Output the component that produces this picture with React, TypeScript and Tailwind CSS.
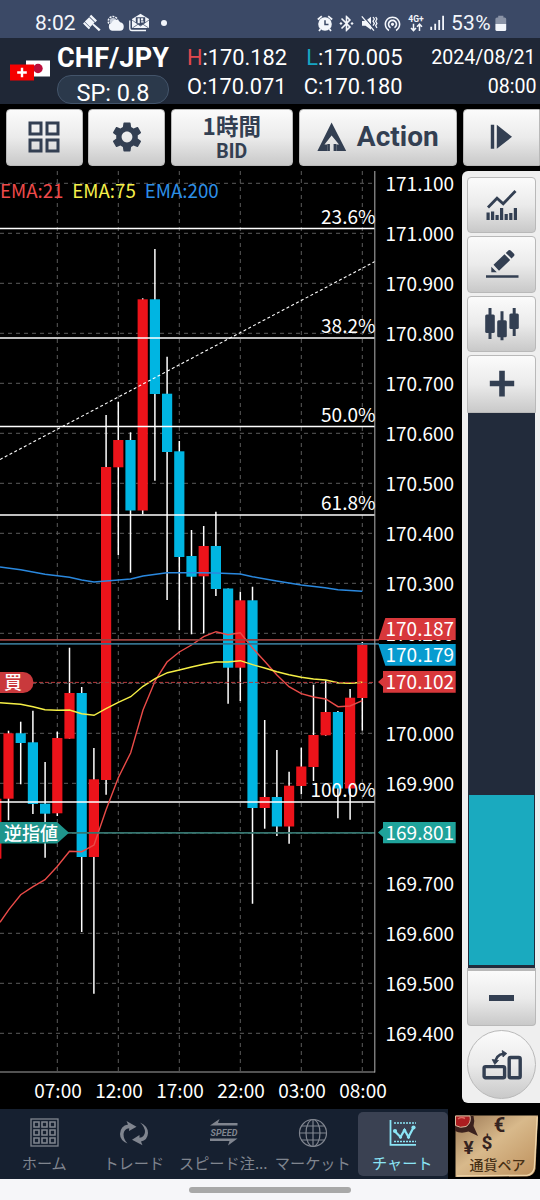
import React from "react";
import { MdSettings, MdBluetoothConnected, MdWifiTethering } from "react-icons/md";

const INK = "#333f52";

/* ---------- chart data ---------- */
// [bodyTop, bodyBottom, wickTop, wickBottom, rising]
type Candle = [number, number, number, number, boolean];

const STEP = 12.2;
const FIRST_X = -3.7;
const candles: Candle[] = [
  [798.7, 858.7, 798.7, 858.7, true],
  [733.3, 798.7, 730.7, 820.3, true],
  [733.3, 743, 721.7, 784.3, false],
  [742.3, 804, 710.7, 814, false],
  [803.7, 813.7, 762, 857.7, false],
  [738, 813.3, 731.7, 816, true],
  [693, 738.7, 647.7, 738.7, true],
  [693, 857, 687, 932, false],
  [779.3, 857, 748, 993.7, true],
  [467, 780, 415, 794.7, true],
  [440, 467.3, 401.7, 555, true],
  [440, 510.5, 432.3, 572.7, false],
  [299.3, 510.5, 298.3, 514.3, true],
  [299.3, 394, 249, 480.7, false],
  [393.7, 452, 356.7, 600, false],
  [451.3, 557, 441, 630, false],
  [556, 576.7, 530, 634.3, false],
  [546, 576.3, 526, 633.3, true],
  [546, 589, 511.7, 596, false],
  [588.5, 667.7, 588.5, 703.7, false],
  [600.3, 667.7, 591.7, 701, true],
  [600.3, 808, 586.7, 903.7, false],
  [797, 808, 720, 828.7, true],
  [797, 826.5, 750, 836, false],
  [785.7, 826.5, 771.7, 843.7, true],
  [766.5, 786, 747.7, 794.3, true],
  [735, 767, 684.7, 781, true],
  [712, 735.3, 680.3, 735.7, true],
  [712, 788.5, 711, 818.3, false],
  [697.7, 788.5, 689, 819.7, true],
  [644.7, 698, 642, 730.7, true],
];

const ema200 =
  "0,567 20.7,569.7 45,574.3 69.5,577.3 81.7,580 94,582 106,581 130.7,579 143,576 167,572.7 200,572.7 216,573 240.3,574 252.5,576.7 276.7,581 301.3,585 325,587.7 338,589.7 362.3,591.3";
const ema75 =
  "0,702.7 20.7,704.3 33,706.7 45,709.7 57,710.3 69.5,710 81.7,713.7 94,715.3 106,708.7 118.3,702.3 130.7,696.7 143,686.3 155.5,678.3 167.5,672.7 179.3,670 191.5,667 203.7,664.3 216,662 228,662 240.3,660.7 252.5,664.7 264.7,668 276.9,671.7 289,674.7 301.3,677.3 313.5,679 325.7,680 338,682.7 350,683.3 362.3,682.3";
const ema21 =
  "0,922.3 9,909.3 20.7,894.7 33,886.7 45,879.7 57,866.7 69.5,851.3 81.7,851.7 94,845 106,810 118.3,777.7 130.7,752.7 143,710 155.5,680 167,662 179.3,652 191.5,645 203.7,636.7 216,631.7 228,634.7 240.3,632.7 252.5,648 264.7,661.3 276.9,675 289,686.7 301.3,693.7 313.5,697 325.7,699 338,706.7 350,706 362.3,700.7";

const priceLabels = Array.from({ length: 18 }, (_, i) => ({
  y: 183.3 + i * 50,
  text: (171.1 - i * 0.1).toFixed(3),
}));

const times = ["07:00", "12:00", "17:00", "22:00", "03:00", "08:00"];

const fibs = [
  { y: 228.5, text: "23.6%" },
  { y: 338, text: "38.2%" },
  { y: 426.5, text: "50.0%" },
  { y: 515, text: "61.8%" },
  { y: 802, text: "100.0%" },
];

function Chart() {
  return (
    <svg
      width="462"
      height="938"
      viewBox="0 171 462 938"
      className="block shrink-0 font-['Noto_Sans_CJK_JP',sans-serif] text-[19px]"
    >
      <g stroke="#5c5c5c" strokeWidth="1" strokeDasharray="4 4">
        {priceLabels.map((p) => (
          <line key={p.text} x1="0" x2="374" y1={p.y} y2={p.y} />
        ))}
        {times.map((t, i) => (
          <line key={t} x1={57.3 + i * 61} x2={57.3 + i * 61} y1="171" y2="1072" />
        ))}
      </g>

      {candles.map(([top, bottom, high, low, up], i) => {
        const x = FIRST_X + i * STEP;
        return (
          <g key={i}>
            <line x1={x} x2={x} y1={high} y2={low} stroke="#fff" strokeWidth="1.5" />
            <rect x={x - 5.1} y={top} width="10.2" height={bottom - top} fill={up ? "#ec131a" : "#00b5e2"} />
          </g>
        );
      })}

      <g stroke="#fff" strokeWidth="1.3">
        {fibs.map((f) => (
          <line key={f.text} x1="0" x2="375" y1={f.y} y2={f.y} />
        ))}
      </g>
      <line x1="0" y1="459.5" x2="375" y2="261.5" stroke="#fff" strokeWidth="1.1" strokeDasharray="3 2.4" />

      <g fill="none" strokeWidth="1.4">
        <polyline points={ema200} stroke="#2a88de" />
        <polyline points={ema21} stroke="#ea4b48" />
        <polyline points={ema75} stroke="#f5ef45" />
      </g>

      <line x1="0" x2="379" y1="639.8" y2="639.8" stroke="#964240" strokeWidth="1.7" />
      <line x1="0" x2="379" y1="643.8" y2="643.8" stroke="#34708c" strokeWidth="1.7" />
      <line x1="33" x2="375" y1="682.4" y2="682.4" stroke="#b63a3c" strokeWidth="1" strokeDasharray="4 2" />
      <line x1="68" x2="375" y1="832.8" y2="832.8" stroke="#35756f" strokeWidth="1.7" />

      <g stroke="#a3a3a3" strokeWidth="1.1">
        <line x1="374.8" x2="374.8" y1="171" y2="1072.5" />
        <line x1="0" x2="375" y1="1072" y2="1072" />
      </g>

      <g fill="#fff" textAnchor="end">
        {fibs.map((f) => (
          <text key={f.text} x="375.5" y={f.y - 5}>
            {f.text}
          </text>
        ))}
      </g>

      <g className="text-[18.700px]">
        <text x="0" y="197.6" fill="#ee4a4a">EMA:21</text>
        <text x="72.300" y="197.6" fill="#f6f04a">EMA:75</text>
        <text x="144.800" y="197.6" fill="#2d8fe6">EMA:200</text>
      </g>

      <g fill="#fff">
        {priceLabels.map((p) => (
          <text key={p.text} x="385.5" y={p.y + 7.2}>
            {p.text}
          </text>
        ))}
      </g>
      <g fill="#fff" textAnchor="middle">
        {times.map((t, i) => (
          <text key={t} x={58 + i * 61} y="1097.8">
            {t}
          </text>
        ))}
      </g>

      <path d="M385.3 618H455.7V640H378.3Z" fill="#d8383b" />
      <path d="M378.3 644H455.7V665.7H385.3Z" fill="#079cd0" />
      <path d="M383 671H455.7V692.8H383V686.5L378 682L383 677.5Z" fill="#d8383b" />
      <path d="M383 822H455.7V843.2H383V837L378 832.5L383 828Z" fill="#1fa39b" />
      <g fill="#fff">
        <text x="385.5" y="636">170.187</text>
        <text x="385.5" y="661.7">170.179</text>
        <text x="385.5" y="688.7">170.102</text>
        <text x="385.5" y="839.5">169.801</text>
      </g>

      <path d="M0 672H23A10.4 10.4 0 0 1 23 693H0Z" fill="#c9393c" />
      <path d="M0 822H57L69 832.7L57 843.5H0Z" fill="#1f958c" />
      <g fill="#fff" className="text-[18px] font-medium">
        <text x="4" y="689.3">買</text>
        <text x="4" y="839.5">逆指値</text>
      </g>
    </svg>
  );
}

/* ---------- status bar ---------- */
function StatusBar() {
  return (
    <div className="flex h-[37.5px] shrink-0 items-center bg-[#3b4966] pt-[9px] font-['Roboto',sans-serif] text-[21px] leading-[28px] text-[#f3f6fb]">
      <span className="ml-[35px] w-[47px]">8:02</span>
      <svg className="ml-[1px] block" width="19" height="18" viewBox="0 0 19 18" fill="#f3f6fb">
        <path d="M8.200 .8L14 6.600L12.300 8.300L6.500 2.500ZM6.200 3.200L11.600 8.600L7.200 13L1.800 7.600ZM1.500 8L7.300 13.800L5.800 15.300L0 9.500Z" />
        <path d="M10.500 9.400L17.600 15.400L15.900 17.200L9.200 10.800Z" />
      </svg>
      <svg className="ml-[5px] block" width="18" height="17" viewBox="0 0 18 17">
        <circle cx="6" cy="6.2" r="4.7" fill="none" stroke="#f3f6fb" strokeWidth="1.6" strokeDasharray="2 1" />
        <circle cx="6" cy="6.2" r="3.2" fill="#c5ccd9" />
        <path d="M5 15.8a4 4 0 0 1-.4-7.7 4.6 4.6 0 0 1 8.6-.8 4.3 4.3 0 0 1-.2 8.5Z" fill="#f3f6fb" />
      </svg>
      <svg className="-mt-[2px] ml-[4px] block" width="21" height="19" viewBox="0 0 21 19">
        <path d="M3 6L11.5 .8L20 6V15H3Z" fill="#f3f6fb" />
        <path d="M6.8 4.2h9.4v5.6l-4.7 3-4.7-3Z" fill="#3b4966" />
        <path d="M8.600 5.200h2.200v5H8.600zM12 5.200h2.200v2.200h-2.200zM12 8.200h2.600v1.400h-2.600z" fill="#f3f6fb" />
        <path d="M3 7l8.5 6L20 7M3.4 15l6-4M19.6 15l-6-4" fill="none" stroke="#3b4966" strokeWidth=".7" />
        <path d="M.8 7.5V15.2Q.8 17.5 3 17.5H17" fill="none" stroke="#f3f6fb" strokeWidth="1.3" />
      </svg>
      <span className="ml-[11px] size-[6px] rounded-full bg-[#f3f6fb]" />
      <svg className="ml-[149.500px] block" width="16" height="17" viewBox="0 0 16 17">
        <circle cx="8" cy="9" r="6.800" fill="#f3f6fb" />
        <path d="M.8 4.500L4.800 1.200M15.200 4.500L11.200 1.200M3.500 14L2 16M12.500 14L14 16" stroke="#f3f6fb" strokeWidth="1.700" />
        <path d="M8 5.200V9.400H11.500" fill="none" stroke="#3b4966" strokeWidth="1.500" />
      </svg>
      <MdBluetoothConnected className="ml-[4px] block" size={19} />
      <svg className="ml-[5.500px] block" width="17" height="17" viewBox="0 0 17 17">
        <path d="M1 6h3.5L10 1.8v13L4.5 10.8H1Z" fill="#f3f6fb" />
        <path d="M2 .8L14 14.800" stroke="#3b4966" strokeWidth="1.200" />
        <path d="M.8 1.3L13 15.6M12 2l1.4 2-1.4 2.2 1.4 2.2L12 10.6M14.7 2l1.2 2-1.2 2.2 1.2 2.2-1.2 2.2 1.2 2.4" fill="none" stroke="#f3f6fb" strokeWidth="1.3" />
      </svg>
      <MdWifiTethering className="ml-[4.5px] block" size={19} />
      <div className="ml-[5px] flex w-[19px] flex-col items-center">
        <span className="text-[8.5px] leading-[8px] font-bold">4G+</span>
        <svg className="block" width="13" height="9" viewBox="0 0 13 9" fill="none" stroke="#f3f6fb" strokeWidth="1.5">
          <path d="M3.5 .8V7.4M1 5L3.5 7.6L6 5M9.5 8V1.2M7 3.8L9.5 1.2L12 3.8" />
        </svg>
      </div>
      <svg className="ml-[4.5px] block" width="15" height="16" viewBox="0 0 15 16" fill="#f3f6fb">
        <path d="M.3 11.8h1.8V15H.3zM4.3 8.7h1.8V15H4.3zM8.3 5h1.8v10H8.3zM12.2 .8h1.8V15h-1.8z" />
      </svg>
      <span className="ml-[6px] w-[43px] tracking-[0.300px]">53%</span>
      <svg className="ml-[1px] block" width="12" height="17" viewBox="0 0 12 17">
        <path d="M3.2 .8h5.2v1.7h1.2q1.6 0 1.6 1.6V9H.4V4.100q0-1.600 1.600-1.600h1.200Z" fill="#8a93a6" />
        <path d="M.4 9h10.800v5.500q0 1.600-1.600 1.600H2q-1.600 0-1.600-1.600Z" fill="#f3f6fb" />
      </svg>
    </div>
  );
}

/* ---------- quote header ---------- */
function Header() {
  return (
    <div className="flex h-[66px] shrink-0 items-start overflow-hidden bg-[#1f2736] font-['Roboto',sans-serif] text-white">
      <svg className="mt-[22px] ml-[10px] block shrink-0" width="41" height="21" viewBox="0 0 41 21">
        <rect x="16" y=".5" width="24" height="16" fill="#fff" />
        <circle cx="28" cy="8.500" r="4.700" fill="#bd0d3a" />
        <rect x="0" y="4.500" width="24" height="16" fill="#f50000" />
        <path d="M10.800 7.700h2.400v3.600h3.600v2.400h-3.600v3.600h-2.400v-3.600H7.200v-2.400h3.600Z" fill="#fff" />
      </svg>
      <div className="ml-[6px] flex w-[130px] shrink-0 flex-col">
        <span className="mt-[4px] text-[27px] leading-[32px] font-bold tracking-[0.200px] whitespace-nowrap">CHF/JPY</span>
        <span className="mt-px flex h-[29px] w-[112px] items-center justify-center rounded-[14px] border border-[#43546a] bg-[#2b394b] pt-[7px] text-[23.500px] leading-[28px]">
          SP: 0.8
        </span>
      </div>
      <div className="mt-[5px] flex w-[116px] shrink-0 flex-col text-[21.800px] leading-[29px]">
        <span><span className="text-[#e0484e]">H</span>:170.182</span>
        <span>O:170.071</span>
      </div>
      <div className="mt-[5px] flex w-[99.500px] shrink-0 flex-col items-end text-[21.800px] leading-[29px]">
        <span><span className="text-[#16a5c4]">L</span>:170.005</span>
        <span>C:170.180</span>
      </div>
      <div className="mt-[5px] flex w-[134px] shrink-0 flex-col items-end text-[19.600px] leading-[29px]">
        <span className="mr-[1px]">2024/08/21</span>
        <span>08:00</span>
      </div>
    </div>
  );
}

/* ---------- toolbar ---------- */
const BTN =
  "flex shrink-0 items-center justify-center border border-[#b9b9b9] bg-linear-to-b from-[#fbfbfb] via-[#ebebeb] to-[#c9c9c9] text-[#333f52]";

function Toolbar() {
  return (
    <div className="flex h-[67px] shrink-0 items-start gap-[5.500px] overflow-hidden bg-black pt-[5px] pl-[5.500px] font-['Roboto',sans-serif]">
      <div className={`${BTN} h-[57px] w-[77px] rounded-[4px]`}>
        <svg className="block" width="32" height="32" viewBox="0 0 32 32" fill="none" stroke={INK} strokeWidth="3">
          <path d="M2 2h11v11H2zM19 2h11v11H19zM2 19h11v11H2zM19 19h11v11H19z" />
        </svg>
      </div>
      <div className={`${BTN} h-[57px] w-[77px] rounded-[4px]`}>
        <MdSettings size={36} color={INK} />
      </div>
      <div className={`${BTN} h-[57px] w-[122.500px] flex-col rounded-[4px]`}>
        <span className="font-['Noto_Sans_CJK_JP',sans-serif] text-[22.500px] leading-[27px] font-bold">1時間</span>
        <span className="mt-px text-[19.500px] leading-[23px] font-bold">BID</span>
      </div>
      <div className={`${BTN} h-[57px] w-[158.500px] rounded-[4px]`}>
        <svg className="block" width="30" height="30" viewBox="0 0 30 30" fill={INK}>
          <path d="M14.600 .5L29.200 29H19.400V22.500H22L14.600 13.500L7.500 22.500H10.300V29H.4Z" />
          <path d="M11.600 29V21.500H9.800L14.700 15.500L19.700 21.500H17.900V29H16.600V20L14.700 18L12.900 20V29Z" fill="#e4e4e4" />
          <path d="M12.900 22h-2.600V29h2.600zM16.600 22h2.800V29h-2.800z" />
        </svg>
        <span className="ml-[10px] text-[28px] leading-[34px] font-bold">Action</span>
      </div>
      <div className={`${BTN} h-[57px] w-[77px] rounded-l-[4px]`}>
        <svg className="block" width="23" height="26" viewBox="0 0 23 26" fill={INK}>
          <path d="M.8 .8h3.400v24H.8zM6.800 .8L22 12.800L6.800 24.800Z" />
        </svg>
      </div>
    </div>
  );
}

/* ---------- side tools ---------- */
function SideTools() {
  return (
    <div className="mt-0 flex h-[932px] w-[78px] shrink-0 flex-col items-start rounded-l-[6px] bg-[#efefef] pt-[6px] pl-[5px]">
      <div className={`${BTN} h-[56.500px] w-[69px] rounded-[4px]`}>
        <svg className="block" width="32" height="32" viewBox="0 0 32 32" fill={INK}>
          <path d="M2 18.500L11 9.200L17.200 14.800L29.500 2" fill="none" stroke={INK} strokeWidth="2.800" />
          <path d="M.5 23.500h3.200v7.500H.5zM5 22.500h3.200v8.500H5zM9.500 26h3.200v5H9.500zM14 19h3.200v12H14zM18.600 25h3.200v6h-3.200zM23.200 24h3.200v7h-3.200zM27.800 19h3.200v12h-3.200z" />
        </svg>
      </div>
      <div className={`${BTN} mt-[3px] h-[56.500px] w-[69px] rounded-[4px]`}>
        <svg className="block" width="34" height="32" viewBox="0 0 34 32" fill={INK}>
          <path d="M1 27.300h32.500v2.400H1z" />
          <path d="M6.300 24.300V18.700L11.800 24.300ZM8.500 16.800L19.500 6.200L25.200 12L14 22.700ZM20.800 4.900L23.600 2.300Q24.700 1.500 25.700 2.500L29 5.800Q29.900 6.900 29 7.900L26.500 10.600Z" />
        </svg>
      </div>
      <div className={`${BTN} mt-[3px] h-[56.500px] w-[69px] rounded-[4px]`}>
        <svg className="block" width="34" height="34" viewBox="0 0 34 34" fill={INK}>
          <rect x=".2" y="7.500" width="9.600" height="18.500" rx="1.500" />
          <rect x="12.200" y="13.300" width="9.600" height="17" rx="1.500" />
          <rect x="24.400" y="6.500" width="9.400" height="15.500" rx="1.500" />
          <path d="M3.500 1h3v31h-3zM15.500 4.200h3v29h-3zM27.700 1h3v28h-3z" />
        </svg>
      </div>
      <div className={`${BTN} mt-[3px] h-[57.500px] w-[69px] rounded-t-[4px]`}>
        <svg className="block" width="26" height="27" viewBox="0 0 26 27" fill={INK}>
          <path d="M10.200 .8h5.600v10h9.400v5.500h-9.400v10.200h-5.600V16.300H.8v-5.500h9.400Z" />
        </svg>
      </div>
      <div className="ml-[1px] flex h-[555px] w-[67px] shrink-0 flex-col justify-end bg-[#222b3b] px-px pb-[2.500px]">
        <div className="h-[170.500px] bg-[#1aaabf]" />
      </div>
      <div className={`${BTN} h-[58px] w-[69px] rounded-b-[4px] border-t-[3px] border-t-[#b8b8b8]`}>
        <div className="h-[6px] w-[25px] bg-[#333f52]" />
      </div>
      <div className={`${BTN} mt-[4px] h-[69px] w-[69px] rounded-full`}>
        <svg className="mt-[1px] block" width="40" height="32" viewBox="0 0 40 32" fill="none" stroke={INK}>
          <rect x="2.100" y="17.600" width="20.500" height="11.200" rx="1.500" strokeWidth="3.400" />
          <rect x="27.200" y="8.500" width="11" height="20.300" rx="1.500" strokeWidth="3.400" />
          <path d="M13.500 13.500Q14 6 21.500 4.800" strokeWidth="2.400" />
          <path d="M20.200 1.500L24.800 4.500L21 8ZM10.200 10.500L16.500 11.500L12.800 15.500Z" fill={INK} strokeWidth=".8" />
        </svg>
      </div>
    </div>
  );
}

/* ---------- bottom navigation ---------- */
function NavItem({ label, active, children }: { label: string; active?: boolean; children: React.ReactNode }) {
  return (
    <div
      className={`flex h-[64px] w-[89.500px] shrink-0 flex-col items-center rounded-[5px] pt-[6px] ${
        active ? "bg-[#3a4152] text-[#8be4f5]" : "text-[#80858f]"
      }`}
    >
      <div className="flex h-[30px] items-center justify-center">{children}</div>
      <span className="mt-[2px] mr-[1px] font-['Noto_Sans_CJK_JP',sans-serif] text-[15.200px] leading-[24px] whitespace-nowrap">
        {label}
      </span>
    </div>
  );
}

function BottomNav() {
  return (
    <nav className="flex h-[70px] shrink-0 items-start bg-[#162030] pt-[3px]">
      <NavItem label="ホーム">
        <svg className="block" width="29" height="29" viewBox="0 0 29 29" fill="none" stroke="currentColor">
          <rect x="1" y="1" width="27" height="27" strokeWidth="1.300" />
          <path
            d="M4 4h5v5H4zM12 4h5v5h-5zM20 4h5v5h-5zM4 12h5v5H4zM12 12h5v5h-5zM20 12h5v5h-5zM4 20h5v5H4zM12 20h5v5h-5zM20 20h5v5h-5z"
            strokeWidth="1.600"
          />
        </svg>
      </NavItem>
      <NavItem label="トレード">
        <svg className="block" width="30" height="26" viewBox="0 0 30 26" fill="currentColor">
          <path d="M8.500 23.500Q1 20.500 1 14Q1.500 5.500 9 4.500L7.500 1L17.500 6.800L10 11L10.200 8.300Q5 9 4.500 14Q4.500 19.500 8.500 23.500Z" />
          <path d="M21 2.500Q29 6 29 13Q28.500 20.500 22 21.500L23.500 25.200L13 19.800L20.500 15L20.500 17.800Q25.500 17 26 12Q26 7 21 2.500Z" />
        </svg>
      </NavItem>
      <NavItem label="スピード注...">
        <svg className="block" width="30" height="29" viewBox="0 0 30 29" fill="currentColor">
          <path d="M1 7.500L10.500 1L9 5H28.500V7.500ZM1 20.500H28.500L19 27.500L20.500 23H1Z" />
          <text
            x="15"
            y="17.600"
            textAnchor="middle"
            textLength="27"
            className="font-['Roboto',sans-serif] text-[9px] font-bold italic"
          >
            SPEED
          </text>
        </svg>
      </NavItem>
      <NavItem label="マーケット">
        <svg className="block" width="30" height="30" viewBox="0 0 30 30" fill="none" stroke="currentColor" strokeWidth="1.200">
          <circle cx="15" cy="15" r="13.500" />
          <ellipse cx="15" cy="15" rx="7" ry="13.500" />
          <path d="M15 1.500V28.500M1.500 15H28.500M3.500 8H26.500M3.500 22H26.500" />
        </svg>
      </NavItem>
      <NavItem label="チャート" active>
        <svg className="block" width="28" height="28" viewBox="0 0 28 28" fill="none" stroke="currentColor" strokeWidth="1.800">
          <path d="M1.500 1V25.800H27" />
          <path d="M5 4H27M5 22.500H27" strokeWidth="1.500" strokeDasharray="2 1" />
          <path d="M6 12.500L11.500 18L15.500 11L19.500 18L24.500 8.500" strokeWidth="2.200" />
          <g fill="currentColor" stroke="none">
            <circle cx="6" cy="12" r="2.100" />
            <circle cx="11.500" cy="18" r="1.700" />
            <circle cx="15.500" cy="11.500" r="1.700" />
            <circle cx="19.500" cy="18" r="1.700" />
            <circle cx="24.500" cy="8.500" r="2.100" />
          </g>
        </svg>
      </NavItem>
      <div className="-mt-[3px] flex h-[70px] flex-1 justify-start bg-black pt-[6px] pl-[7.500px]">
        <svg className="block" width="84" height="63" viewBox="0 0 84 63">
          <defs>
            <linearGradient id="gold" x1="0" y1="0" x2="1" y2="1">
              <stop offset="0" stopColor="#9b7854" />
              <stop offset=".45" stopColor="#d8b98b" />
              <stop offset="1" stopColor="#bd8f5b" />
            </linearGradient>
          </defs>
          <path d="M.5 .5H83L80.500 54Q79 61 72 61.500L.5 62Z" fill="url(#gold)" />
          <path d="M82.200 2L79.300 53Q78 59.500 72 60.300L2 60.800" fill="none" stroke="#efd5aa" strokeWidth="1.300" />
          <path d="M0 1H18.500Q20 6 18.500 11L23 21L13.500 16.500Q6 19 0 16Z" fill="#3b211d" />
          <path d="M.5 1H15Q16.500 8 11 11.500Q5 13.500 .5 10.500Z" fill="#ac1d20" stroke="#d8bca0" strokeWidth="1" />
          <path d="M3 4Q6 1.500 10 3.500" fill="none" stroke="#dc6962" strokeWidth="1.500" />
          <g fill="#352320" className="font-['Roboto',sans-serif] font-bold" textAnchor="middle">
            <text x="44.500" y="17" className="text-[20px]">€</text>
            <text x="32" y="34" className="text-[19px]">$</text>
            <text x="13.500" y="39" className="text-[19px]">¥</text>
          </g>
          <text
            x="42.500"
            y="55"
            textAnchor="middle"
            fill="#473015"
            className="font-['Noto_Sans_CJK_JP',sans-serif] text-[14px] font-medium"
          >
            通貨ペア
          </text>
        </svg>
      </div>
    </nav>
  );
}

export default function App() {
  return (
    <div className="flex h-[1200px] w-[540px] flex-col overflow-hidden bg-black">
      <StatusBar />
      <Header />
      <Toolbar />
      <div className="flex h-[938px] shrink-0 items-start bg-black">
        <Chart />
        <SideTools />
      </div>
      <BottomNav />
      <div className="flex flex-1 items-start justify-center bg-[#f6f6f9] pt-[8px]">
        <div className="h-[6px] w-[162px] rounded-full bg-[#a8a8a8]" />
      </div>
    </div>
  );
}
